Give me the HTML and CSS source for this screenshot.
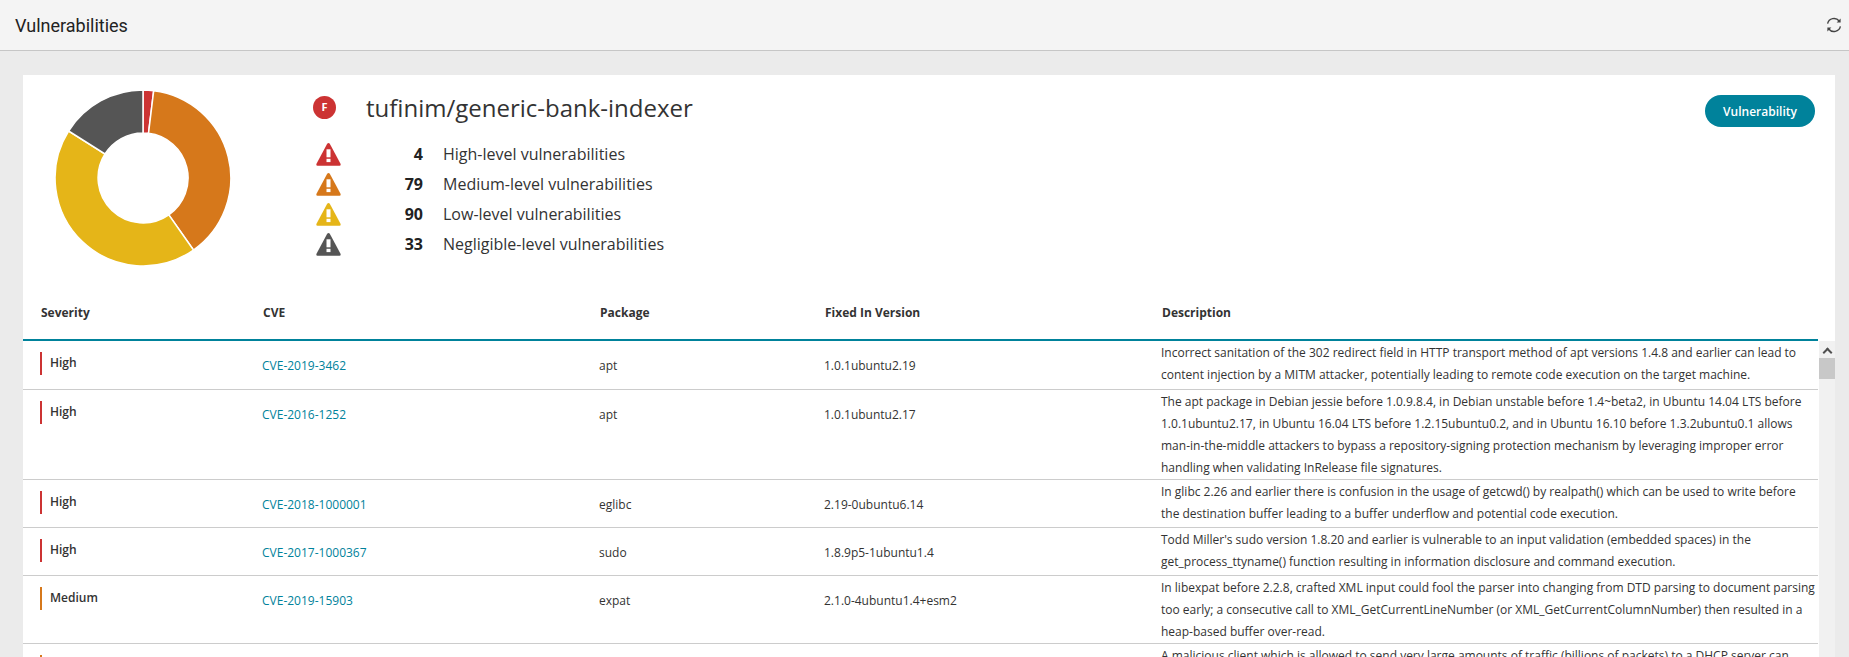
FILE: index.html
```html
<html>
<head>
    <title>Vulnerabilities</title>
    <link rel="stylesheet" href="styles.css">
</head>
<body>
    <div class="topbar">
        <span class="page-title">Vulnerabilities</span>
        <svg class="refresh" viewBox="0 0 16 16" width="16" height="16">
            <path d="M1.6 6.6A6.6 6.6 0 0 1 13.2 4" />
            <path d="M14.4 9.4A6.6 6.6 0 0 1 2.8 12" />
            <path class="fill" d="M14.6 1.4v4h-4z" />
            <path class="fill" d="M1.4 14.6v-4h4z" />
        </svg>
    </div>

    <div class="card">
        <div class="summary">
            <svg class="donut" viewBox="0 0 180 180" width="180" height="180">
                <path class="seg high" d="M90 2A88 88 0 0 1 100.7 2.7L95.5 45.3A45 45 0 0 0 90 45Z" />
                <path class="seg medium" d="M100.7 2.7A88 88 0 0 1 140.5 162L115.800 126.900A45 45 0 0 0 95.5 45.3Z" />
                <path class="seg low" d="M140.5 162A88 88 0 0 1 15.600 43L52 66A45 45 0 0 0 115.800 126.900Z" />
                <path class="seg negligible" d="M15.600 43A88 88 0 0 1 90 2L90 45A45 45 0 0 0 52 66Z" />
            </svg>
            <div class="info">
                <div class="image-name">
                    <span class="grade">F</span>
                    <span class="name">tufinim/generic-bank-indexer</span>
                </div>
                <div class="counts">
                    <div class="count-row">
                        <svg class="warn c-high" viewBox="0 0 25 24" width="25" height="24"><path d="M11.2 1.800q1.300-1.600 2.600 0L24.500 21.800q.6 1.900-1 1.900H1.500q-1.600 0-1-1.900Z" /><rect x="10.500" y="7.300" width="4" height="8" /><rect x="10.500" y="16.800" width="4" height="3.300" /></svg>
                        <b>4</b><span>High-level vulnerabilities</span>
                    </div>
                    <div class="count-row">
                        <svg class="warn c-medium" viewBox="0 0 25 24" width="25" height="24"><path d="M11.2 1.800q1.300-1.600 2.600 0L24.500 21.800q.6 1.900-1 1.900H1.500q-1.600 0-1-1.900Z" /><rect x="10.500" y="7.300" width="4" height="8" /><rect x="10.500" y="16.800" width="4" height="3.300" /></svg>
                        <b>79</b><span>Medium-level vulnerabilities</span>
                    </div>
                    <div class="count-row">
                        <svg class="warn c-low" viewBox="0 0 25 24" width="25" height="24"><path d="M11.2 1.800q1.300-1.600 2.600 0L24.500 21.800q.6 1.900-1 1.900H1.500q-1.600 0-1-1.900Z" /><rect x="10.500" y="7.300" width="4" height="8" /><rect x="10.500" y="16.800" width="4" height="3.300" /></svg>
                        <b>90</b><span>Low-level vulnerabilities</span>
                    </div>
                    <div class="count-row">
                        <svg class="warn c-negligible" viewBox="0 0 25 24" width="25" height="24"><path d="M11.2 1.800q1.300-1.600 2.600 0L24.500 21.800q.6 1.900-1 1.900H1.500q-1.600 0-1-1.900Z" /><rect x="10.500" y="7.300" width="4" height="8" /><rect x="10.500" y="16.800" width="4" height="3.300" /></svg>
                        <b>33</b><span>Negligible-level vulnerabilities</span>
                    </div>
                </div>
            </div>
            <button class="tab-btn">Vulnerability</button>
        </div>

        <div class="table-wrap">
            <div class="table-main">
                <div class="row head">
                    <div class="col-sev">Severity</div>
                    <div class="col-cve">CVE</div>
                    <div class="col-pkg">Package</div>
                    <div class="col-fix">Fixed In Version</div>
                    <div class="col-desc">Description</div>
                </div>
                <div class="row first">
                    <div class="col-sev"><span class="sev b-high">High</span></div>
                    <div class="col-cve"><a href="#">CVE-2019-3462</a></div>
                    <div class="col-pkg">apt</div>
                    <div class="col-fix">1.0.1ubuntu2.19</div>
                    <div class="col-desc">Incorrect sanitation of the 302 redirect field in HTTP transport method of apt versions 1.4.8 and earlier can lead to content injection by a MITM attacker, potentially leading to remote code execution on the target machine.</div>
                </div>
                <div class="row">
                    <div class="col-sev"><span class="sev b-high">High</span></div>
                    <div class="col-cve"><a href="#">CVE-2016-1252</a></div>
                    <div class="col-pkg">apt</div>
                    <div class="col-fix">1.0.1ubuntu2.17</div>
                    <div class="col-desc">The apt package in Debian jessie before 1.0.9.8.4, in Debian unstable before 1.4~beta2, in Ubuntu 14.04 LTS before 1.0.1ubuntu2.17, in Ubuntu 16.04 LTS before 1.2.15ubuntu0.2, and in Ubuntu 16.10 before 1.3.2ubuntu0.1 allows man-in-the-middle attackers to bypass a repository-signing protection mechanism by leveraging improper error handling when validating InRelease file signatures.</div>
                </div>
                <div class="row">
                    <div class="col-sev"><span class="sev b-high">High</span></div>
                    <div class="col-cve"><a href="#">CVE-2018-1000001</a></div>
                    <div class="col-pkg">eglibc</div>
                    <div class="col-fix">2.19-0ubuntu6.14</div>
                    <div class="col-desc">In glibc 2.26 and earlier there is confusion in the usage of getcwd() by realpath() which can be used to write before the destination buffer leading to a buffer underflow and potential code execution.</div>
                </div>
                <div class="row">
                    <div class="col-sev"><span class="sev b-high">High</span></div>
                    <div class="col-cve"><a href="#">CVE-2017-1000367</a></div>
                    <div class="col-pkg">sudo</div>
                    <div class="col-fix">1.8.9p5-1ubuntu1.4</div>
                    <div class="col-desc">Todd Miller's sudo version 1.8.20 and earlier is vulnerable to an input validation (embedded spaces) in the get_process_ttyname() function resulting in information disclosure and command execution.</div>
                </div>
                <div class="row">
                    <div class="col-sev"><span class="sev b-medium">Medium</span></div>
                    <div class="col-cve"><a href="#">CVE-2019-15903</a></div>
                    <div class="col-pkg">expat</div>
                    <div class="col-fix">2.1.0-4ubuntu1.4+esm2</div>
                    <div class="col-desc">In libexpat before 2.2.8, crafted XML input could fool the parser into changing from DTD parsing to document parsing too early; a consecutive call to XML_GetCurrentLineNumber (or XML_GetCurrentColumnNumber) then resulted in a heap-based buffer over-read.</div>
                </div>
                <div class="row">
                    <div class="col-sev"><span class="sev b-medium"></span></div>
                    <div class="col-cve"></div>
                    <div class="col-pkg"></div>
                    <div class="col-fix"></div>
                    <div class="col-desc">A malicious client which is allowed to send very large amounts of traffic (billions of packets) to a DHCP server can</div>
                </div>
            </div>
            <div class="scrollbar">
                <span class="scroll-up"></span>
                <span class="scroll-thumb"></span>
            </div>
        </div>
    </div>
</body>
</html>
```

FILE: styles.css
```css
html, body { margin: 0; height: 657px; overflow: hidden; }
body { background-color: #ebebeb; font-family: "Open Sans", sans-serif; font-size: 12px; color: #333333; }

.topbar { height: 50px; border-bottom: 1px solid #c6c6c6; background-color: #f4f4f4; display: flex; align-items: center; justify-content: space-between; padding: 0 7px 0 15px; }
.page-title { font-family: Roboto, sans-serif; font-size: 18px; color: #222222; }
.refresh { fill: none; stroke: #444444; stroke-width: 1.4; }
.refresh .fill { fill: #444444; stroke: none; }

.card { margin: 24px 14px 0 23px; background-color: #ffffff; }

.summary { display: flex; height: 216px; }
.donut { margin: 13px 0 0 30px; flex: none; }
.seg { stroke: #ffffff; stroke-width: 1.5; }
.high { fill: #cc3333; }
.medium { fill: #d6781b; }
.low { fill: #e5b518; }
.negligible { fill: #555555; }

.info { margin-left: 79px; padding-top: 18px; flex: 1; }
.image-name { display: flex; align-items: center; height: 28px; }
.grade { width: 23px; height: 23px; border-radius: 50%; background-color: #cc3333; color: #ffffff; font-size: 11px; font-weight: 700; text-align: center; line-height: 22px; margin-left: 1px; }
.name { font-size: 24px; margin-left: 30px; color: #333333; }

.counts { margin-top: 18px; padding-left: 4px; }
.count-row { display: flex; align-items: center; height: 30px; font-size: 16px; }
.count-row b { width: 82px; text-align: right; font-size: 16px; color: #222222; }
.count-row span { margin-left: 20px; }
.warn { flex: none; }
.warn rect { fill: #ffffff; }
.c-high path { fill: #cc3333; }
.c-medium path { fill: #d6781b; }
.c-low path { fill: #e5b518; }
.c-negligible path { fill: #555555; }

.tab-btn { width: 110px; height: 32px; margin: 20px 20px 0 0; border: none; border-radius: 16px; background-color: #00829b; color: #ffffff; font-family: "Open Sans", sans-serif; font-size: 12px; font-weight: 600; }

.table-wrap { display: flex; }
.table-main { width: 1795px; flex: none; }
.row { display: flex; min-height: 47px; border-bottom: 1px solid #cccccc; }
.row.first { min-height: 48px; }
.row.head { height: 48px; min-height: 48px; border-bottom: 2px solid #00829b; align-items: center; font-weight: 700; }
.row > div { box-sizing: border-box; }
.row.head > div { padding: 0 0 5px 1px; line-height: normal; }
.col-sev { width: 239px; padding-left: 17px; }
.col-cve { width: 337px; }
.col-pkg { width: 225px; }
.col-fix { width: 337px; }
.col-desc { flex: 1; line-height: 22px; padding: 1px 2px 0 0; }
.row > .col-cve, .row > .col-pkg, .row > .col-fix { padding-top: 15px; line-height: 20px; }
.row.head > .col-sev { padding-left: 18px; }
.col-cve a { color: #00829b; text-decoration: none; }

.sev { display: block; margin-top: 11px; border-left: 2px solid; padding-left: 8px; height: 23px; line-height: 22px; font-weight: 600; }
.b-high { border-color: #cc3333; }
.b-medium { border-color: #d6781b; }

.scrollbar { width: 16px; margin-top: 50px; margin-left: 1px; background-color: #f1f1f1; display: flex; flex-direction: column; align-items: center; }
.scroll-up { width: 5px; height: 5px; margin-top: 8px; border-top: 2px solid #505050; border-left: 2px solid #505050; transform: rotate(45deg); }
.scroll-thumb { width: 16px; height: 21px; margin-top: 2px; background-color: #c8c8c8; }
```
